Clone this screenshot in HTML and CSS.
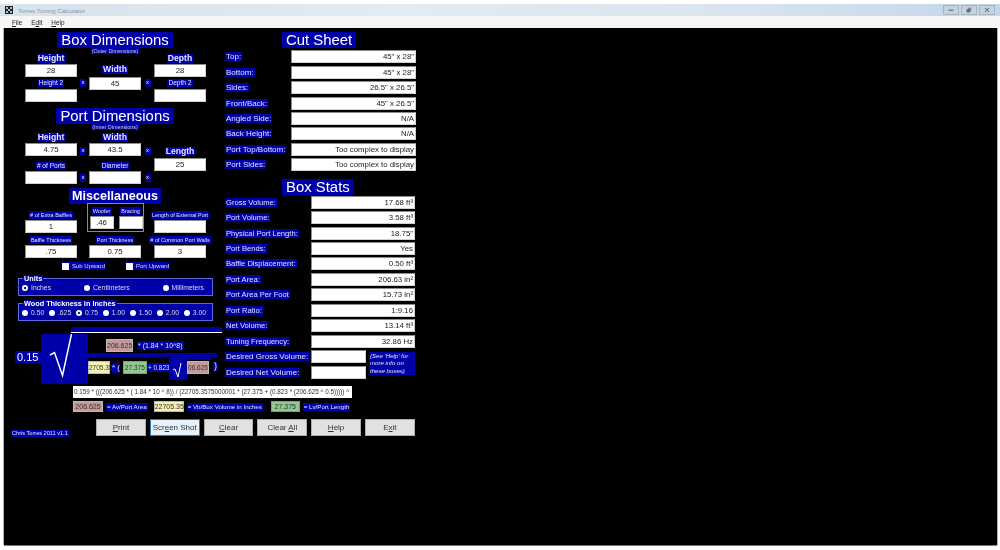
FILE: index.html
```html
<!DOCTYPE html>
<html lang="en">
<head>
<meta charset="utf-8">
<title>Torres Tuning Calculator</title>
<link rel="stylesheet" href="styles.css">
</head>
<body>
<div class="window">
  <header class="titlebar">
    <div class="title-left">
      <svg class="app-icon" viewBox="0 0 8 8"><rect width="8" height="8" fill="#222"/><path d="M1 1h2v2H1zM5 1h2v2H5zM3 3h2v2H3zM1 5h2v2H1zM5 5h2v2H5z" fill="#bbb"/></svg>
      <span class="title-text">Torres Tuning Calculator</span>
    </div>
    <div class="win-btns">
      <span class="win-btn"><svg viewBox="0 0 16 10"><rect x="5" y="4.5" width="6" height="1.5" fill="#667"/></svg></span>
      <span class="win-btn"><svg viewBox="0 0 16 10"><rect x="6.5" y="2" width="4.5" height="4" fill="#889"/><rect x="5" y="4" width="4.5" height="4" fill="#667"/></svg></span>
      <span class="win-btn"><svg viewBox="0 0 16 10"><path d="M5.5 2.5l5 5M10.5 2.5l-5 5" stroke="#667" stroke-width="1.3"/></svg></span>
    </div>
  </header>
  <nav class="menubar">
    <span><u>F</u>ile</span><span>E<u>d</u>it</span><span><u>H</u>elp</span>
  </nav>
  <main class="canvas">
    <div class="upper">
      <section class="left">
        <div class="head box-head"><h1 class="title">Box Dimensions</h1><span class="note">(Outer Dimensions)</span></div>
        <div class="dims box-grid">
          <span class="lab big c1 r1">Height</span>
          <span class="lab big c3 r1 wide-lab">Width</span>
          <span class="lab big c5 r1">Depth</span>
          <span class="field ctr c1 r2">28</span>
          <span class="field ctr c5 r2">28</span>
          <span class="lab c1 r3">Height 2</span>
          <span class="x c2 r3">x</span>
          <span class="field ctr c3 r3">45</span>
          <span class="x c4 r3">x</span>
          <span class="lab c5 r3">Depth 2</span>
          <span class="field c1 r4"></span>
          <span class="field c5 r4"></span>
        </div>
        <div class="head port-head"><h1 class="title">Port Dimensions</h1><span class="note">(Inner Dimensions)</span></div>
        <div class="dims port-grid">
          <span class="lab big c1 r1">Height</span>
          <span class="lab big c3 r1">Width</span>
          <span class="field ctr c1 r2">4.75</span>
          <span class="x c2 r2">x</span>
          <span class="field ctr c3 r2">43.5</span>
          <span class="x c4 r2">x</span>
          <span class="lab big c5 r2 len-lab">Length</span>
          <span class="field ctr c5 r3">25</span>
          <span class="lab c1 r3 low-lab"># of Ports</span>
          <span class="lab c3 r3 low-lab">Diameter</span>
          <span class="field c1 r4"></span>
          <span class="x c2 r4">x</span>
          <span class="field c3 r4"></span>
          <span class="x c4 r4">x</span>
        </div>
        <div class="head misc-head"><h2 class="title misc-title">Miscellaneous</h2></div>
        <div class="dims misc-grid">
          <span class="lab c1 r1"># of Extra Baffles</span>
          <div class="woofer-box">
            <div class="woofer-col"><span class="lab">Woofer</span><span class="field ctr">.46</span></div>
            <div class="woofer-col"><span class="lab">Bracing</span><span class="field"></span></div>
          </div>
          <span class="lab c5 r1">Length of External Port</span>
          <span class="field ctr c1 r2">1</span>
          <span class="field c5 r2"></span>
          <span class="lab c1 r3">Baffle Thickness</span>
          <span class="lab c3 r3">Port Thickness</span>
          <span class="lab c5 r3"># of Common Port Walls</span>
          <span class="field ctr c1 r4">.75</span>
          <span class="field ctr c3 r4">0.75</span>
          <span class="field ctr c5 r4">3</span>
        </div>
        <div class="checks">
          <span class="check"><i class="cb"></i><span>Sub Upward</span></span>
          <span class="check"><i class="cb"></i><span>Port Upward</span></span>
        </div>
        <fieldset class="group">
          <legend>Units</legend>
          <div class="radios units">
            <span class="radio"><i class="rb on"></i>Inches</span>
            <span class="radio"><i class="rb"></i>Centimeters</span>
            <span class="radio"><i class="rb"></i>Millimeters</span>
          </div>
        </fieldset>
        <fieldset class="group wood">
          <legend>Wood Thickness in Inches</legend>
          <div class="radios">
            <span class="radio"><i class="rb"></i>0.50</span>
            <span class="radio"><i class="rb"></i>.625</span>
            <span class="radio"><i class="rb on"></i>0.75</span>
            <span class="radio"><i class="rb"></i>1.00</span>
            <span class="radio"><i class="rb"></i>1.50</span>
            <span class="radio"><i class="rb"></i>2.00</span>
            <span class="radio"><i class="rb"></i>3.00</span>
          </div>
        </fieldset>
        <div class="formula">
          <div class="bar top-bar"></div>
          <div class="formula-body">
            <span class="coef">0.15</span>
            <div class="root big-root"><svg viewBox="0 0 47 50"><path d="M9 21l4.500-2.500 8 23L30.500 0" fill="none" stroke="#fff" stroke-width="1.5"/></svg></div>
            <div class="fraction">
              <div class="numer"><span class="chip pink">206.625</span><span class="op">* (1.84 * 10^8)</span></div>
              <div class="bar mid-bar"></div>
              <div class="denom">
                <span class="chip yellow cut">2705.35</span><span class="op star">* (</span>
                <span class="chip green">27.375</span><span class="op plus">+ 0.823</span>
                <div class="small-root-wrap">
                  <div class="bar small-bar"></div>
                  <div class="small-line">
                    <div class="root small-root"><svg viewBox="0 0 18 20"><path d="M4 10l2-1 3 8 3-14" fill="none" stroke="#fff" stroke-width="1"/></svg></div>
                    <span class="chip pink tight">06.625</span><span class="op paren">)</span>
                  </div>
                </div>
              </div>
            </div>
          </div>
        </div>
      </section>
      <section class="right">
        <div class="head cut-head"><h1 class="title">Cut Sheet</h1></div>
        <div class="rows cut-rows">
          <div class="row"><span class="rlab">Top:</span><span class="field rt">45" x 28"</span></div>
          <div class="row"><span class="rlab">Bottom:</span><span class="field rt">45" x 28"</span></div>
          <div class="row"><span class="rlab">Sides:</span><span class="field rt">26.5" x 26.5"</span></div>
          <div class="row"><span class="rlab">Front/Back:</span><span class="field rt">45" x 26.5"</span></div>
          <div class="row"><span class="rlab">Angled Side:</span><span class="field rt">N/A</span></div>
          <div class="row"><span class="rlab">Back Height:</span><span class="field rt">N/A</span></div>
          <div class="row"><span class="rlab">Port Top/Bottom:</span><span class="field rt">Too complex to display</span></div>
          <div class="row"><span class="rlab">Port Sides:</span><span class="field rt">Too complex to display</span></div>
        </div>
        <div class="head stats-head"><h1 class="title">Box Stats</h1></div>
        <div class="rows stat-rows">
          <div class="row"><span class="rlab">Gross Volume:</span><span class="field rt">17.68 ft³</span></div>
          <div class="row"><span class="rlab">Port Volume:</span><span class="field rt">3.58 ft³</span></div>
          <div class="row"><span class="rlab">Physical Port Length:</span><span class="field rt">18.75"</span></div>
          <div class="row"><span class="rlab">Port Bends:</span><span class="field rt">Yes</span></div>
          <div class="row"><span class="rlab">Baffle Displacement:</span><span class="field rt">0.50 ft³</span></div>
          <div class="row"><span class="rlab">Port Area:</span><span class="field rt">206.63 in²</span></div>
          <div class="row"><span class="rlab">Port Area Per Foot</span><span class="field rt">15.73 in²</span></div>
          <div class="row"><span class="rlab">Port Ratio:</span><span class="field rt">1:9.16</span></div>
          <div class="row"><span class="rlab">Net Volume:</span><span class="field rt">13.14 ft³</span></div>
          <div class="row"><span class="rlab">Tuning Frequency:</span><span class="field rt">32.86 Hz</span></div>
          <div class="desired">
            <div class="desired-rows">
              <div class="row"><span class="rlab">Desired Gross Volume:</span><span class="field short"></span></div>
              <div class="row"><span class="rlab">Desired Net Volume:</span><span class="field short"></span></div>
            </div>
            <p class="hint">(See 'Help' for more info on these boxes)</p>
          </div>
        </div>
      </section>
    </div>
    <div class="expression">0.159 * (((206.625 * ( 1.84 * 10 ^ 8)) / (22705.3575000001 * (27.375 + (0.823 * (206.625 ^ 0.5))))) ^</div>
    <div class="legend">
      <span class="chip pink l1">206.625</span><span class="key k1">= Av/Port Area</span>
      <span class="chip yellow l1">22705.35</span><span class="key k2">= Vb/Box Volume in Inches</span>
      <span class="chip green l1">27.375</span><span class="key">= Lv/Port Length</span>
    </div>
    <div class="footer">
      <span class="credit">Chris Torres 2011 v1.1</span>
      <div class="buttons">
        <span class="btn"><u>P</u>rint</span>
        <span class="btn default">Scr<u>e</u>en Shot</span>
        <span class="btn"><u>C</u>lear</span>
        <span class="btn">Clear <u>A</u>ll</span>
        <span class="btn"><u>H</u>elp</span>
        <span class="btn">E<u>x</u>it</span>
      </div>
    </div>
  </main>
</div>
</body>
</html>
```
FILE: styles.css
```css
* { box-sizing: border-box; }
html, body { margin: 0; height: 100%; }
body {
  background: #fff;
  font-family: "Liberation Sans", Arial, sans-serif;
  overflow: hidden;
  width: 1000px;
  height: 550px;
}
.window {
  width: 1000px;
  height: 550px;
  padding-top: 4px;
  display: flex;
  flex-direction: column;
  filter: blur(0.5px);
}
.titlebar {
  height: 12px;
  flex: none;
  background: linear-gradient(90deg, #d6e2ec, #e3ebf3 40%, #d8e4ef 75%, #c3d6e8);
  display: flex;
  justify-content: space-between;
  align-items: center;
  padding: 0 5px 0 5px;
}
.title-left { display: flex; align-items: center; gap: 5px; }
.app-icon { width: 8px; height: 8px; }
.title-text { font-size: 6.2px; color: #8c959e; }
.win-btns { display: flex; gap: 2px; }
.win-btn {
  width: 16px; height: 10px;
  background: #c6d2de;
  border: 1px solid #a5b3c0;
  display: flex;
}
.win-btn svg { width: 100%; height: 100%; }
.menubar {
  height: 12px;
  flex: none;
  background: #f4f6f8;
  display: flex;
  gap: 9px;
  padding-left: 12px;
  align-items: center;
  font-size: 6.4px;
  color: #222;
}
.canvas {
  flex: none;
  height: 517px;
  margin: 0 3px 0 4px;
  background: #000;
  padding-top: 4px;
  display: flex;
  flex-direction: column;
  box-shadow: -1px 0 0 #aeb4ba, 1px 0 0 #aeb4ba, 0 1px 0 #777;
}
.upper { display: flex; height: 352px; flex: none; }
.left { width: 218px; flex: none; display: flex; flex-direction: column; }
.left > * { flex: none; }
.right { width: 200px; flex: none; display: flex; flex-direction: column; }
.right > * { flex: none; }
.head { display: flex; flex-direction: column; align-items: center; }
.title {
  margin: 0;
  background: #0000a8;
  color: #fff;
  font-weight: 400;
  font-size: 14.9px;
  line-height: 16px;
  padding: 0 4px;
  white-space: nowrap;
}
.misc-title { font-weight: 700; font-size: 12.6px; padding: 0 3px; }
.note {
  background: #0000a8;
  color: #ccd;
  font-size: 5.4px;
  line-height: 6px;
  padding: 0 1px;
}
.box-head { width: 222px; margin-left: 0; }
.port-head { width: 222px; margin-top: 6px; }
.misc-head { width: 222px; margin-top: 4px; }
.dims {
  display: grid;
  grid-template-columns: 52px 12px 52px 13px 52px;
  margin-left: 21px;
  justify-items: center;
}
.box-grid { grid-template-rows: 10px 13px 12px 13px; }
.port-grid { margin-top: 2px; grid-template-rows: 11px 15px 13px 13px; }
.misc-grid { margin-top: 3px; grid-template-rows: 13px 13px 12px 13px; }
.c1 { grid-column: 1; } .c2 { grid-column: 2; } .c3 { grid-column: 3; }
.c4 { grid-column: 4; } .c5 { grid-column: 5; }
.r1 { grid-row: 1; } .r2 { grid-row: 2; } .r3 { grid-row: 3; } .r4 { grid-row: 4; }
.lab {
  background: #0000a8;
  color: #e6e6ff;
  font-size: 6.6px;
  line-height: 8px;
  padding: 0 1px;
  align-self: center;
  white-space: nowrap;
}
.misc-grid .lab { font-size: 5.5px; }
.lab.big {
  font-size: 8.6px;
  font-weight: 700;
  line-height: 9px;
  padding: 0 1px;
  align-self: end;
  margin-bottom: 1px;
}
.wide-lab { grid-row: 1 / span 2; align-self: end !important; margin-bottom: 3px !important; }
.len-lab { margin-bottom: 2px !important; }
.low-lab { align-self: end; margin-bottom: 1px; }
.misc-grid .r1, .misc-grid .r3 { align-self: end; margin-bottom: 1px; }
.field {
  background: #fff;
  border: 1px solid #8c8c8c;
  border-right-color: #d0d0d0;
  border-bottom-color: #d0d0d0;
  color: #222;
  font-size: 7.8px;
  line-height: 11px;
  height: 13px;
  width: 52px;
  display: block;
  white-space: nowrap;
}
.ctr { text-align: center; }
.rt { text-align: right; padding-right: 1px; }
.x {
  background: #0000a8;
  color: #fff;
  font-size: 5.8px;
  line-height: 7px;
  width: 6px;
  height: 8px;
  text-align: center;
  align-self: center;
}
.woofer-box {
  grid-column: 3;
  grid-row: 1 / span 2;
  justify-self: center;
  align-self: start;
  margin-top: -4px;
  width: 57px;
  height: 29px;
  flex: none;
  border: 1px solid #8a8a8a;
  display: flex;
  gap: 5px;
  padding: 3px 1px 0 2px;
}
.woofer-col { display: flex; flex-direction: column; align-items: center; gap: 1px; width: 24px; }
.woofer-col .field { width: 24px; }
.checks { display: flex; margin: 4px 0 0 58px; gap: 21px; height: 10px; }
.check { display: flex; align-items: center; background: #0000a8; color: #dde; font-size: 6px; height: 8px; width: 43px; gap: 3px; white-space: nowrap; }
.cb { width: 7px; height: 7px; background: #fff; flex: none; }
.group {
  margin: 3px 0 0 14px;
  width: 195px;
  height: 21px;
  border: 1px solid #5a6adf;
  background: #0000a8;
  padding: 0 3px;
  min-width: 0;
}
.group legend {
  color: #fff;
  background: #0000a8;
  font-weight: 700;
  font-size: 7.3px;
  line-height: 7px;
  padding: 0 1px;
  margin-left: 1px;
}
.group.wood { margin-top: 4px; }
.radios {
  display: flex;
  justify-content: space-between;
  color: #dde;
  font-size: 6.8px;
  line-height: 8px;
  padding: 2px 3px 0 0;
}
.radio { display: flex; align-items: center; gap: 3px; white-space: nowrap; }
.rb { width: 6px; height: 6px; border-radius: 50%; background: #fff; flex: none; }
.rb.on { background: radial-gradient(circle, #333 0 1.4px, #fff 1.6px); }
.units { padding: 2px 5px 0 0; }
.bar { background: #0000a8; }
.formula { margin-top: 6px; display: flex; flex-direction: column; }
.top-bar { height: 6px; width: 151px; margin-left: 67px; border-bottom: 1px solid #fff; flex: none; }
.formula-body { display: flex; width: 218px; margin-top: 1px; height: 50px; flex: none; }
.coef {
  background: #0000a8;
  color: #fff;
  font-size: 11px;
  line-height: 12px;
  height: 12px;
  width: 26px;
  margin: 17px 0 0 11px;
  padding-left: 2px;
  flex: none;
}
.root { background: #0000a8; flex: none; }
.root svg { display: block; width: 100%; height: 100%; }
.big-root { width: 47px; height: 50px; }
.fraction { width: 129px; flex: none; display: flex; flex-direction: column; }
.numer { display: flex; align-items: center; margin: 5px 0 0 18px; height: 13px; gap: 4px; }
.mid-bar { height: 4px; margin-top: 1px; flex: none; }
.denom { display: flex; align-items: flex-start; margin-top: 1px; height: 27px; }
.chip {
  font-size: 7px;
  line-height: 11px;
  height: 13px;
  border: 1px solid #b9b9b9;
  text-align: center;
  color: #333;
  white-space: nowrap;
  flex: none;
}
.pink { background: #c39a9a; }
.yellow { background: #f6f0b4; }
.green { background: #92c792; border-color: #74a874; }
.numer .chip { width: 27px; }
.denom > .chip { margin-top: 3px; }
.denom .chip { font-size: 6.5px; }
.cut { width: 22px; }
.green.chip { width: 24px; }
.op {
  background: #0000a8;
  color: #dfe4ff;
  font-size: 7px;
  line-height: 9px;
  padding: 0 1px;
  white-space: nowrap;
  flex: none;
}
.denom > .op { margin-top: 5px; }
.denom > .star { margin: 5px 4px 0 2px; width: 7px; font-size: 8px; line-height: 10px; height: 10px; padding: 0; }
.plus { width: 22px; font-size: 6.4px; padding: 0 0 0 1px; }
.small-root-wrap { width: 47px; flex: none; display: flex; flex-direction: column; }
.small-bar { height: 2px; width: 43px; flex: none; }
.small-line { display: flex; align-items: flex-start; }
.small-root { width: 18px; height: 20px; }
.tight { width: 22px; margin-top: 1px; }
.paren { margin: 2px 0 0 4px; font-size: 9px; }
.right .head { width: 200px; align-items: flex-start; }
.right .title { margin-left: 60px; padding: 0 4px; }
.rows { display: flex; flex-direction: column; margin-left: 3px; }
.row { display: flex; justify-content: space-between; align-items: center; height: 15.45px; flex: none; }
.rlab {
  background: #0000a8;
  color: #dfe2ff;
  font-size: 7.6px;
  line-height: 9px;
  padding: 0 1px;
  white-space: nowrap;
}
.cut-rows .rlab, .desired .rlab { font-size: 8px; }
.cut-rows { margin-top: 1px; width: 191px; }
.cut-rows .field { width: 125px; }
.stat-rows { width: 190px; }
.stat-rows .field { width: 104px; }
.stats-head { margin-top: 6px; }
.desired { display: flex; gap: 3px; width: 190px; }
.desired-rows { width: 141px; flex: none; }
.stat-rows .field.short { width: 55px; }
.hint {
  margin: 3px 0 0;
  background: #0000a8;
  color: #dfe2ff;
  font-size: 6.1px;
  line-height: 7.4px;
  font-style: italic;
  width: 46px;
  height: 23px;
  padding-left: 1px;
}
.expression {
  margin: 2px 0 0 69px;
  width: 279px;
  height: 12px;
  background: #fff;
  color: #333;
  font-size: 6.3px;
  line-height: 12px;
  padding-left: 1px;
  white-space: nowrap;
  flex: none;
}
.legend { display: flex; align-items: center; margin: 3px 0 0 69px; height: 11px; flex: none; }
.l1 { height: 11px; line-height: 9px; }
.legend .chip.pink { width: 30px; }
.legend .chip.yellow { width: 30px; }
.legend .chip.green { width: 29px; }
.key {
  background: #0000a8;
  color: #e6e8ff;
  font-size: 6.2px;
  line-height: 8px;
  padding: 0 1px;
  margin-left: 3px;
  white-space: nowrap;
}
.k1 { margin-right: 6px; }
.k2 { margin-right: 8px; }
.footer { display: flex; margin-top: 7px; height: 19px; flex: none; }
.credit {
  background: #0000a8;
  color: #dfe2ff;
  font-size: 5.6px;
  line-height: 7px;
  height: 7px;
  margin: 11px 0 0 7px;
  width: 58px;
  white-space: nowrap;
  padding-left: 1px;
  flex: none;
}
.buttons { display: flex; gap: 4px; margin-left: 27px; }
.btn {
  width: 49.8px;
  height: 17px;
  background: #e1e1e1;
  border: 1px solid #adadad;
  color: #333;
  font-size: 8px;
  line-height: 15px;
  text-align: center;
  white-space: nowrap;
}
.btn.default { background: #e5f1fb; border-color: #2d7bc4; }
```
